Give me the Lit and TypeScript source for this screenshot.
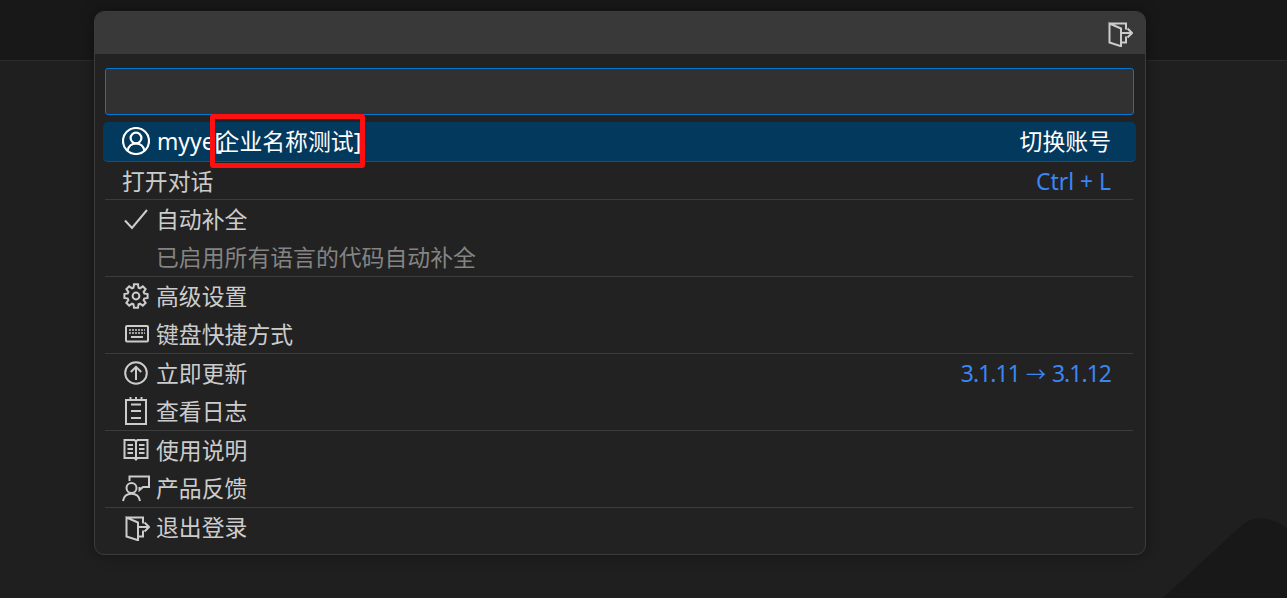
import { LitElement, html, css, svg } from 'lit';
import { customElement } from 'lit/decorators.js';

// cog outline, computed so the 8 teeth stay even
const gearPath = () => {
  const pts: string[] = [];
  for (let i = 0; i < 8; i++) {
    const a = (i * Math.PI) / 4;
    const at = (r: number, da: number) =>
      `${(14 + r * Math.cos(a + da)).toFixed(2)} ${(14 + r * Math.sin(a + da)).toFixed(2)}`;
    pts.push(at(8.6, -0.3), at(11.8, -0.17), at(11.8, 0.17), at(8.6, 0.3));
  }
  return `M${pts.join('L')}Z`;
};

const icons: Record<string, unknown> = {
  user: svg`<circle cx="14" cy="14" r="13"/><circle cx="14" cy="11" r="5.4"/><path d="M5.500 23.500c1.200-4.500 4.400-7 8.500-7s7.300 2.500 8.500 7"/>`,
  check: svg`<path d="M3 15.500l7 7.500L25 5"/>`,
  gear: svg`<path d="${gearPath()}"/><circle cx="14" cy="14" r="3.400"/>`,
  keyboard: svg`<rect x="4" y="6" width="22" height="15.500" rx="1"/><path stroke-width="1.500" stroke-dasharray="2 1" d="M7 10h16M7 13h16"/><path d="M9 17h12"/>`,
  up: svg`<circle cx="14" cy="14" r="10.800"/><path d="M14 21V8M8.800 13L14 7.800l5.200 5.200"/>`,
  log: svg`<path d="M4 3h20v24H4zM8.500 0v3M14 0v3M19.500 0v3M9 7.500h10M9 14h10M9 21h10"/>`,
  book: svg`<path d="M2.500 4h10L14 5.500 15.500 4h10v18h-10L14 23.500 12.500 22h-10zM14 5.500v18M5.500 9h5.500M5.500 13h5.500M5.500 17h5.500M17 9h5.500M17 13h5.500M17 17h5.500"/>`,
  feedback: svg`<circle cx="9.500" cy="14" r="5"/><path d="M1 27c.8-4.500 4-7.200 8.500-7.200S17.200 22.500 18 27M7.500 7V2.500h19.500V13h-6l-3.500 3v-3"/>`,
  door: svg`<path d="M4.500 4.500h16.500v6M21 17.500v6h-5M4.500 4.500v19l11.500 3.700V9.500L4.500 4.500zM16 14h10.500M22.500 9.500l4.500 4.500-4.500 4.500"/>`,
};

const icon = (name: string) => html`<svg class="icon" viewBox="0 0 28 28">${icons[name]}</svg>`;

@customElement('app-root')
export class AppRoot extends LitElement {
  static styles = css`
    :host {
      display: block;
      position: relative;
      height: 598px;
      overflow: hidden;
      background: #1f1f1f;
      font-family: "Noto Sans", "Noto Sans CJK SC", sans-serif;
      font-size: 22.85px;
      line-height: 1;
      color: #cccccc;
    }
    .topbar {
      height: 60px;
      background: #181818;
      border-bottom: 1px solid #2b2b2b;
    }
    .corner {
      position: absolute;
      left: 1150px;
      top: 510px;
      width: 137px;
      height: 88px;
      fill: #181818;
    }
    .panel {
      position: absolute;
      left: 94px;
      top: 11px;
      width: 1052px;
      height: 544px;
      box-sizing: border-box;
      background: #222222;
      border: 1px solid #3c3c3c;
      border-radius: 10px;
      box-shadow: 0 0 14px rgba(0, 0, 0, 0.36);
      overflow: hidden;
    }
    .title {
      height: 42px;
      background: #393939;
      display: flex;
      align-items: center;
      justify-content: flex-end;
      padding-right: 12px;
    }
    .body {
      padding: 14px 9px 0 8px;
    }
    .input {
      height: 47px;
      box-sizing: border-box;
      margin: 0 2px 7px 2px;
      background: #313131;
      border: 1px solid #0078d4;
      border-radius: 3px;
    }
    .row {
      height: 38.5px;
      box-sizing: border-box;
      display: flex;
      align-items: center;
      padding: 3px 25px 0 19px;
      white-space: nowrap;
    }
    .row .icon {
      position: relative;
      top: -1.5px;
    }
    .row.account {
      position: relative;
      height: 39.5px;
      background: #04395e;
      border-radius: 5px;
      color: #ffffff;
      border-bottom: 1px solid #2d4a60;
    }
    .row.end {
      position: relative;
      padding-top: 2px;
    }
    .row.open {
      padding-top: 3px;
    }
    .row.end::after {
      content: "";
      position: absolute;
      left: 2px;
      right: 3px;
      bottom: 0;
      height: 1px;
      background: #3c3c3c;
    }
    .icon {
      width: 28px;
      height: 28px;
      flex: none;
      margin-right: 6px;
      fill: none;
      stroke: currentColor;
      stroke-width: 2;
    }
    .title .icon {
      margin: 0;
    }
    .account .icon {
      margin-right: 7px;
      stroke-width: 2.2;
    }
    .spacer {
      width: 34px;
      flex: none;
    }
    .label {
      flex: 1;
    }
    .hint {
      color: #3a86f5;
    }
    .tight {
      letter-spacing: -5.5px;
    }
    .version {
      letter-spacing: -0.9px;
    }
    .arrow {
      font-size: 20px;
      margin: 0 6px;
      letter-spacing: 0;
    }
    .muted {
      color: #848484;
    }
    .mark {
      position: absolute;
      left: 107px;
      top: -8px;
      width: 155px;
      height: 54px;
      box-sizing: border-box;
      border: 5px solid #ff0f0f;
      border-radius: 3px;
    }
  `;

  private row(name: string, label: string, hint: unknown = '', end = false) {
    return html`<div class="row ${end ? 'end' : ''}">
      ${icon(name)}
      <span class="label">${label}</span>
      ${hint ? html`<span class="hint">${hint}</span>` : ''}
    </div>`;
  }

  render() {
    const version = html`<span class="version">3.1.11<span class="arrow">→</span>3.1.12</span>`;
    return html`
      <div class="topbar"></div>
      <svg class="corner" viewBox="0 0 137 88">
        <path d="M13 88L93 14Q112 1 137 18V88Z" />
      </svg>
      <div class="panel">
        <div class="title">${icon('door')}</div>
        <div class="body">
          <div class="input"></div>
          <div class="row account">
            ${icon('user')}
            <span class="label">myye<span class="tight">[</span>企业名称测试]</span>
            <span>切换账号</span>
            <span class="mark"></span>
          </div>
          <div class="row end open">
            <span class="label">打开对话</span>
            <span class="hint">Ctrl + L</span>
          </div>
          ${this.row('check', '自动补全')}
          <div class="row end">
            <span class="spacer"></span>
            <span class="label muted">已启用所有语言的代码自动补全</span>
          </div>
          ${this.row('gear', '高级设置')}
          ${this.row('keyboard', '键盘快捷方式', '', true)}
          ${this.row('up', '立即更新', version)}
          ${this.row('log', '查看日志', '', true)}
          ${this.row('book', '使用说明')}
          ${this.row('feedback', '产品反馈', '', true)}
          ${this.row('door', '退出登录')}
        </div>
      </div>
    `;
  }
}
